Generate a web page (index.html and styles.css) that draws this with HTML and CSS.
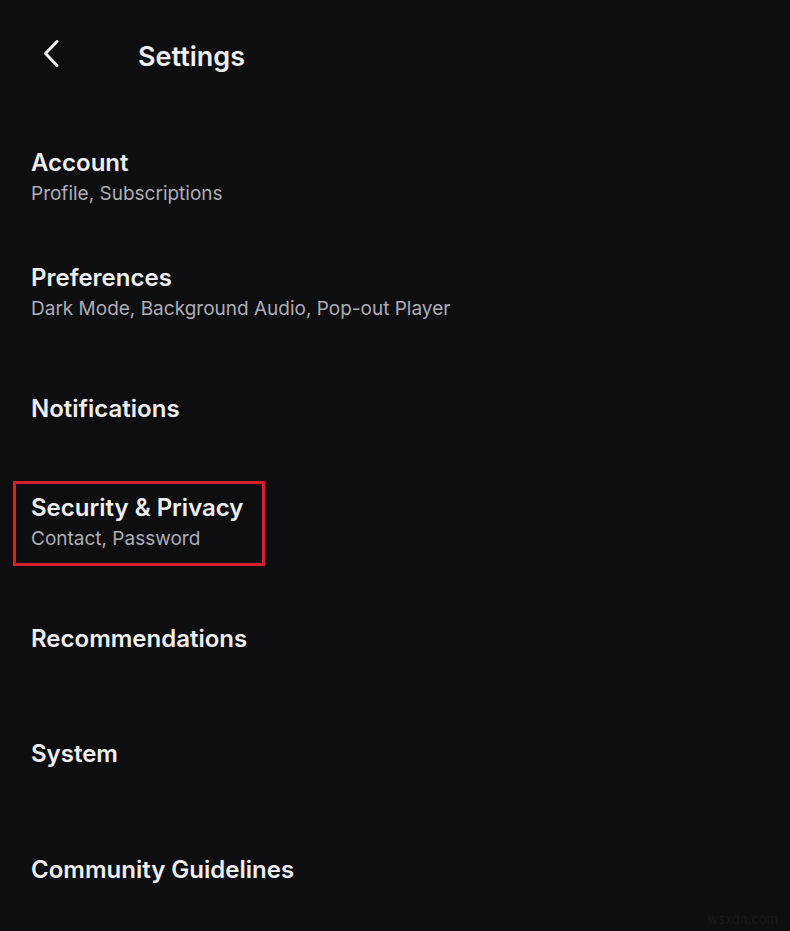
FILE: index.html
```html
<!DOCTYPE html>
<html>
<head>
  <link rel="stylesheet" href="styles.css">
</head>
<body>
  <div class="screen">
    <!-- Header -->
    <div class="header">
      <button class="back-btn" aria-label="Back">
        <svg width="24" height="32" viewBox="0 0 24 32">
          <path d="M17 3.5 L5.5 15.5 L17 27.5" fill="none" stroke="#efeff1" stroke-width="3" stroke-linecap="round" stroke-linejoin="round"/>
        </svg>
      </button>
      <h1 class="title">Settings</h1>
    </div>

    <!-- Settings list -->
    <div class="settings-list">
      <div class="setting-item">
        <span class="item-title">Account</span>
        <span class="item-sub">Profile, Subscriptions</span>
      </div>
      <div class="setting-item">
        <span class="item-title">Preferences</span>
        <span class="item-sub">Dark Mode, Background Audio, Pop-out Player</span>
      </div>
      <div class="setting-item">
        <span class="item-title">Notifications</span>
      </div>
      <div class="setting-item highlighted">
        <span class="item-title">Security &amp; Privacy</span>
        <span class="item-sub">Contact, Password</span>
      </div>
      <div class="setting-item">
        <span class="item-title">Recommendations</span>
      </div>
      <div class="setting-item">
        <span class="item-title">System</span>
      </div>
      <div class="setting-item">
        <span class="item-title">Community Guidelines</span>
      </div>
    </div>

    <span class="watermark">wsxdn.com</span>
  </div>
</body>
</html>
```

FILE: styles.css
```css
body {
  margin: 0;
  background-color: #0e0e10;
  font-family: Inter, 'Noto Sans', sans-serif;
  color: #efeff1;
}
.screen {
  position: relative;
  width: 790px;
  height: 931px;
  overflow: hidden;
}
.header {
  display: flex;
  align-items: center;
  height: 112px;
  margin-bottom: 8px;
  padding-left: 40px;
}
.back-btn {
  display: flex;
  padding: 0;
  margin-top: -4px;
  border: none;
  background: none;
  cursor: pointer;
}
.title {
  margin: 0 0 0 74px;
  font-size: 27px;
  font-weight: 600;
  color: #efeff1;
}
.settings-list {
  display: flex;
  flex-direction: column;
}
.setting-item {
  position: relative;
  display: flex;
  flex-direction: column;
  justify-content: center;
  height: 115.25px;
  padding-left: 31px;
}
.item-title {
  font-size: 24px;
  font-weight: 600;
  line-height: 31px;
}
.item-sub {
  font-size: 19px;
  line-height: 31px;
  color: #adadb8;
}
.highlighted::after {
  content: "";
  position: absolute;
  left: 13px;
  top: 15px;
  width: 252px;
  height: 85px;
  box-sizing: border-box;
  border: 3px solid #d3212d;
}
.watermark {
  position: absolute;
  right: 12px;
  bottom: 4px;
  font-size: 13px;
  color: #18181b;
}
```
